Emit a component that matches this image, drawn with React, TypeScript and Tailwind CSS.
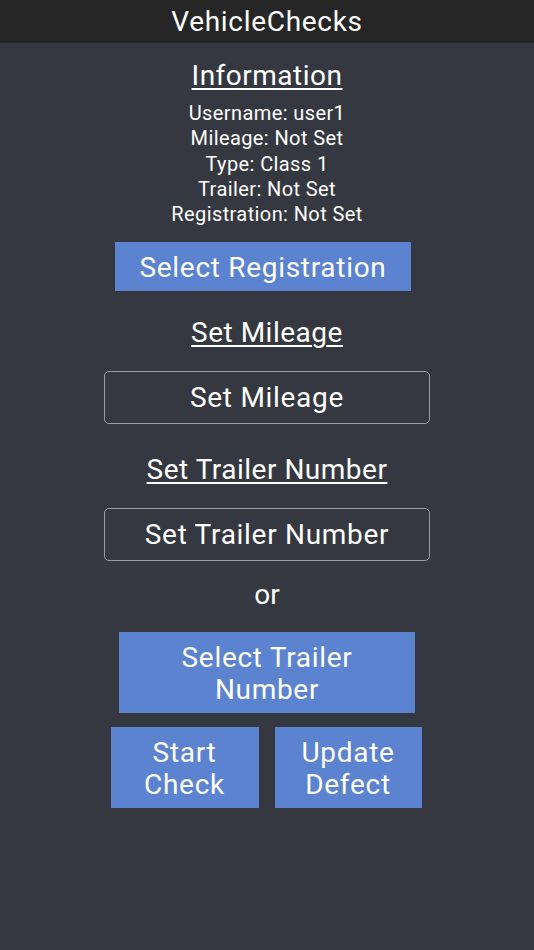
import React from "react";

const FONT = "font-['Roboto',_'Noto_Sans',_sans-serif]";

const info = [
  "Username: user1",
  "Mileage: Not Set",
  "Type: Class 1",
  "Trailer: Not Set",
  "Registration: Not Set",
];

function Heading({ children, className = "" }: { children: React.ReactNode; className?: string }) {
  return (
    <div className={`text-[28px] leading-[34px] tracking-[0.5px] underline underline-offset-[3px] decoration-[1.5px] ${className}`}>
      {children}
    </div>
  );
}

function OutlineButton({ children, className = "" }: { children: React.ReactNode; className?: string }) {
  return (
    <button className={`w-[326px] h-[53px] rounded-[5px] border border-[#9a9ca3] text-[28px] tracking-[0.7px] text-white ${className}`}>
      {children}
    </button>
  );
}

export default function App() {
  return (
    <div className={`${FONT} w-[534px] h-[950px] bg-[#353840] text-white flex flex-col`}>
      {/* top bar */}
      <div className="h-[43px] bg-[#262626] flex items-center justify-center text-[28px] tracking-[0.7px]">
        VehicleChecks
      </div>

      <div className="flex flex-col items-center">
        <Heading className="mt-[16px]">Information</Heading>

        <div className="mt-[8px] flex flex-col items-center text-[20px] leading-[25.3px] tracking-[0.4px]">
          {info.map((line) => (
            <div key={line}>{line}</div>
          ))}
        </div>

        <button className="mt-[15px] mr-[8px] w-[296px] h-[49px] pt-[2px] bg-[#5b83d0] text-[28px] tracking-[0.7px] text-white">
          Select Registration
        </button>

        <Heading className="mt-[25px]">Set Mileage</Heading>
        <OutlineButton className="mt-[21px]">Set Mileage</OutlineButton>

        <Heading className="mt-[29px]">Set Trailer Number</Heading>
        <OutlineButton className="mt-[21px]">Set Trailer Number</OutlineButton>

        <div className="mt-[17px] text-[28px] leading-[34px]">or</div>

        <button className="mt-[20px] w-[296px] h-[81px] pt-[3px] bg-[#5b83d0] text-[28px] leading-[32px] tracking-[0.7px] text-white px-[50px]">
          Select Trailer Number
        </button>

        <div className="mt-[14px] mr-[2px] flex gap-[16px]">
          <button className="w-[148px] h-[81px] pt-[3px] bg-[#5b83d0] text-[28px] leading-[32px] tracking-[0.7px] text-white px-[24px]">
            Start Check
          </button>
          <button className="w-[147px] h-[81px] pt-[3px] bg-[#5b83d0] text-[28px] leading-[32px] tracking-[0.7px] text-white px-[24px]">
            Update Defect
          </button>
        </div>
      </div>
    </div>
  );
}
